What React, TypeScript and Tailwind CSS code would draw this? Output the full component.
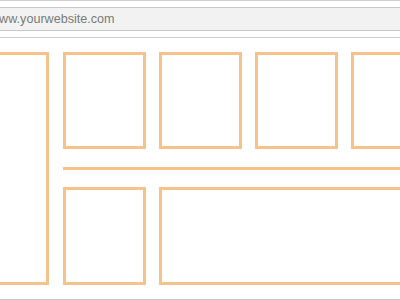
import React from "react";

export default function App() {
  const orange = "border-[#f4c28a]";
  return (
    <div className="w-[400px] h-[300px] bg-white overflow-hidden flex flex-col relative" style={{ fontFamily: '"Liberation Sans", Arial, sans-serif' }}>
      <div className="h-px bg-[#cfcfcf] shrink-0" />
      <div className="h-[6px] shrink-0" />
      <div className="h-[24px] shrink-0 border-y border-[#c8c8c8] bg-[#f2f2f2] flex items-center overflow-hidden">
        <span className="ml-[-10px] text-[12.6px] leading-none text-[#7a7a7a] whitespace-nowrap">www.yourwebsite.com</span>
      </div>
      <div className="h-[6px] shrink-0" />
      <div className="h-px bg-[#cfcfcf] shrink-0" />
      <div className="flex shrink-0 mt-[14px]">
        <div className={`w-[49px] h-[233px] shrink-0 border-[3px] border-l-0 ${orange}`} />
        <div className="ml-[14px] flex flex-col shrink-0 w-[400px]">
          <div className="flex gap-[13px] h-[97px]">
            <div className={`w-[83px] shrink-0 border-[3px] ${orange}`} />
            <div className={`w-[83px] shrink-0 border-[3px] ${orange}`} />
            <div className={`w-[83px] shrink-0 border-[3px] ${orange}`} />
            <div className={`w-[83px] shrink-0 border-[3px] ${orange}`} />
          </div>
          <div className="mt-[18px] h-[3px] bg-[#f4c28a]" />
          <div className="mt-[17px] flex gap-[13px] h-[98px]">
            <div className={`w-[83px] shrink-0 border-[3px] ${orange}`} />
            <div className={`w-[300px] shrink-0 border-[3px] ${orange}`} />
          </div>
        </div>
      </div>
      <div className="flex-1" />
      <div className="h-px bg-[#c8c8c8] shrink-0" />
    </div>
  );
}
